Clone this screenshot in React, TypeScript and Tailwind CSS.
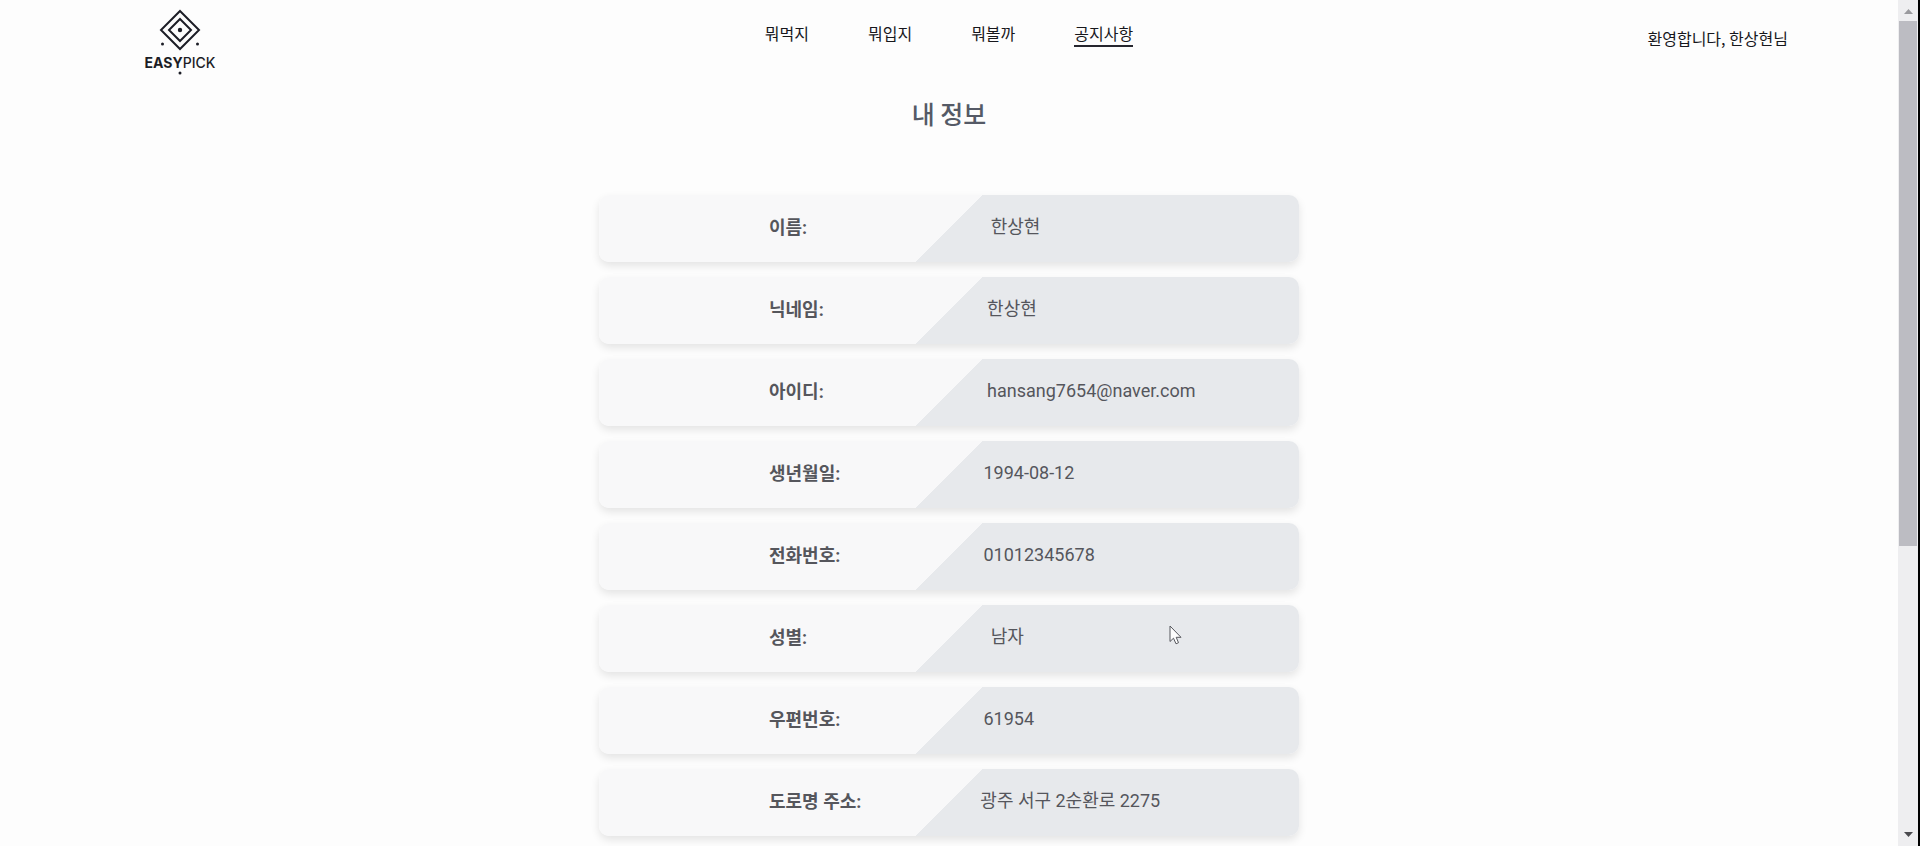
const navItems = [
  { label: "뭐먹지", active: false },
  { label: "뭐입지", active: false },
  { label: "뭐볼까", active: false },
  { label: "공지사항", active: true },
];

// pad: number of spaces typed between the label and its value
const fields = [
  { label: "이름:", value: "한상현", pad: 46 },
  { label: "닉네임:", value: "한상현", pad: 41 },
  { label: "아이디:", value: "hansang7654@naver.com", pad: 41 },
  { label: "생년월일:", value: "1994-08-12", pad: 36 },
  { label: "전화번호:", value: "01012345678", pad: 36 },
  { label: "성별:", value: "남자", pad: 46 },
  { label: "우편번호:", value: "61954", pad: 36 },
  { label: "도로명 주소:", value: "광주 서구 2순환로 2275", pad: 30 },
];

function Logo() {
  return (
    <a href="#" aria-label="EASYPICK" className="ml-[30px] flex w-[80px] flex-col items-center pt-px text-[#1c1d26]">
      <svg width="44" height="46" viewBox="0 0 44 46" fill="none" stroke="currentColor" strokeWidth="2" aria-hidden="true">
        <path d="M22 2 41 21 22 40 3 21Z" />
        <path d="M22 10 33 21 22 32 11 21Z" />
        <circle cx="22" cy="21" r="2.2" fill="currentColor" stroke="none" />
        <circle cx="4.500" cy="35" r="1.500" fill="currentColor" stroke="none" />
        <circle cx="39.500" cy="35" r="1.500" fill="currentColor" stroke="none" />
      </svg>
      <span className="font-['Inter',sans-serif] text-[14px] leading-[15px]">
        <span className="font-bold">EASY</span>
        <span className="font-medium">PICK</span>
      </span>
      <svg width="4" height="7" viewBox="0 0 4 7" aria-hidden="true">
        <circle cx="2" cy="3" r="1.500" fill="currentColor" />
      </svg>
    </a>
  );
}

function Header() {
  return (
    <header className="grid grid-cols-[1fr_auto_1fr] items-start px-[110px] pt-2 text-[16px] leading-[24px] text-[#17171c] font-['Noto_Sans_CJK_KR',sans-serif]">
      <Logo />
      <nav className="flex gap-[59px] pt-[13px]">
        {navItems.map((item) => (
          <a
            key={item.label}
            href="#"
            className={item.active ? "border-b-2 border-[#26262e]" : "border-b-2 border-transparent"}
          >
            {item.label}
          </a>
        ))}
      </nav>
      <p className="justify-self-end pt-[18px]">환영합니다, 한상현님</p>
    </header>
  );
}

function Scrollbar() {
  return (
    <div aria-hidden="true" className="flex w-[22px] shrink-0 border-r-2 border-black bg-[#eeeef0] px-px">
      <div className="flex flex-1 flex-col items-center">
        <svg className="my-[6px] shrink-0" width="9" height="9" viewBox="0 0 9 9">
          <path d="M0 8 4.500 3 9 8Z" fill="#9a9a9e" />
        </svg>
        <div className="h-[62%] w-full bg-[#bcbcc2]" />
        <svg className="mb-[7px] mt-auto shrink-0" width="9" height="9" viewBox="0 0 9 9">
          <path d="M0 2 4.500 7 9 2Z" fill="#4a4a4e" />
        </svg>
      </div>
    </div>
  );
}

export default function App() {
  return (
    <div className="flex h-screen overflow-hidden bg-[#fdfdfd]">
      <div className="min-w-0 flex-1 overflow-hidden">
        <Header />
        <main className="flex flex-col items-center pt-[18px] font-['Roboto','Noto_Sans_CJK_KR',sans-serif]">
          <h1 className="text-[25px] font-medium leading-[36px] text-[#555a66] font-['Noto_Sans_CJK_KR',sans-serif]">내 정보</h1>
          <dl className="mt-[64px] flex w-full max-w-[700px] flex-col gap-[15px]">
            {fields.map((field) => (
              <div
                key={field.label}
                className="flex rounded-[10px] bg-[linear-gradient(135deg,#f8f8f9_50%,#e7e9ec_50%)] pb-[22px] pl-[170px] pt-[19px] text-[18px] leading-[25px] text-[#55565c] shadow-[0_4px_8px_rgba(0,0,0,0.1)]"
              >
                <dt className="-mr-0.5 whitespace-pre">
                  <span className="font-bold">{field.label}</span>
                  <span className="font-['Noto_Sans_CJK_KR',sans-serif]">{" ".repeat(field.pad)}</span>
                </dt>
                <dd>{field.value}</dd>
              </div>
            ))}
          </dl>
        </main>
      </div>
      <Scrollbar />
      <svg className="fixed left-[1169px] top-[625px]" width="13" height="20" viewBox="0 0 13 20" aria-hidden="true">
        <path d="M1 1V16.500L4.500 13.200 7 18.800 9.500 17.700 7.200 12.300H12Z" fill="#fdfdfd" stroke="#55565c" strokeWidth="1" />
      </svg>
    </div>
  );
}
